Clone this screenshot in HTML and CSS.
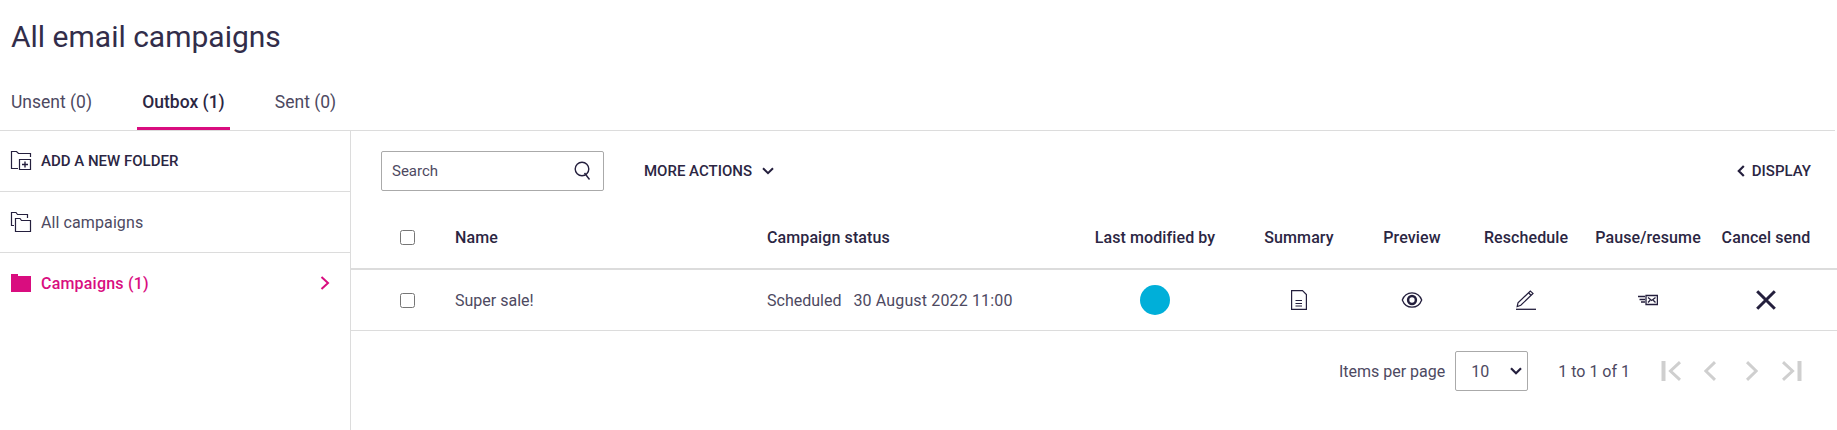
FILE: index.html
```
<!DOCTYPE html>
<html lang="en">
<head>
  <meta charset="UTF-8">
  <meta name="viewport" content="width=device-width, initial-scale=1.0">
  <title>All email campaigns</title>

  <link rel="stylesheet" href="styles.css">
</head>
<body>
  <header>
    <h1>All email campaigns</h1>
    <nav class="tabs">
      <a class="tab tab-unsent"><span>Unsent (0)</span></a>
      <a class="tab tab-outbox active"><span>Outbox (1)</span></a>
      <a class="tab tab-sent"><span>Sent (0)</span></a>
    </nav>
  </header>

  <div class="layout">
    <!-- Folders -->
    <aside class="sidebar">
      <div class="folder add-folder">
        <svg width="22" height="22" viewBox="0 0 22 22" fill="none" stroke="#241f3d" stroke-width="1.2">
          <path d="M8 18.5H1.5V1.5H6.5L8.5 3.5H20.5V7"/>
          <path d="M9.5 9.5H20.5V19.5H9.5Z"/>
          <path d="M15 11.5V17.5M12 14.5H18" stroke-width="1.4"/>
        </svg>
        <span>ADD A NEW FOLDER</span>
      </div>
      <div class="folder">
        <svg width="22" height="22" viewBox="0 0 22 22" fill="none" stroke="#241f3d" stroke-width="1.2">
          <path d="M4 14.5H1.5V1.5H6L7.5 3.5H17.5V7"/>
          <path d="M5.5 20.5V7.5H10L11.5 9.5H20.5V20.5Z"/>
        </svg>
        <span>All campaigns</span>
      </div>
      <div class="folder selected">
        <svg width="22" height="22" viewBox="0 0 22 22" fill="#d90d7f">
          <path d="M1 2H8V4H21V20H1Z"/>
        </svg>
        <span>Campaigns (1)</span>
        <svg class="folder-arrow" width="10" height="16" viewBox="0 0 10 16" fill="none" stroke="#d90d7f" stroke-width="2">
          <path d="M1.5 2L8 8L1.5 14"/>
        </svg>
      </div>
    </aside>

    <main class="content">
      <!-- Toolbar -->
      <div class="toolbar">
        <div class="search">
          <input type="text" placeholder="Search">
          <svg width="18" height="20" viewBox="0 0 18 20" fill="none" stroke="#241f3d" stroke-width="1.4">
            <circle cx="8" cy="8" r="6.8"/>
            <path d="M10.5 12L15.5 18.5"/>
          </svg>
        </div>
        <div class="more-actions">
          <span>MORE ACTIONS</span>
          <svg width="12" height="8" viewBox="0 0 12 8" fill="none" stroke="#241f3d" stroke-width="2">
            <path d="M1 1.2L6 6.2L11 1.2"/>
          </svg>
        </div>
        <div class="display">
          <svg width="8" height="12" viewBox="0 0 8 12" fill="none" stroke="#241f3d" stroke-width="2.2">
            <path d="M6.8 1L1.8 6L6.8 11"/>
          </svg>
          <span>DISPLAY</span>
        </div>
      </div>

      <!-- Campaigns -->
      <table>
        <colgroup>
          <col class="col-check">
          <col class="col-name">
          <col class="col-status">
          <col class="col-modified">
          <col class="col-summary">
          <col class="col-preview">
          <col class="col-reschedule">
          <col class="col-pause">
          <col class="col-cancel">
        </colgroup>
        <thead>
          <tr>
            <th class="check"><input type="checkbox"></th>
            <th class="text">Name</th>
            <th class="text">Campaign status</th>
            <th>Last modified by</th>
            <th>Summary</th>
            <th>Preview</th>
            <th>Reschedule</th>
            <th>Pause/resume</th>
            <th class="last">Cancel send</th>
          </tr>
        </thead>
        <tbody>
          <tr>
            <td class="check"><input type="checkbox"></td>
            <td class="text">Super sale!</td>
            <td class="text">Scheduled <span class="date">30 August 2022 11:00</span></td>
            <td><span class="avatar"></span></td>
            <td>
              <svg width="20" height="20" viewBox="0 0 20 20" fill="none" stroke="#241f3d" stroke-width="1.2">
                <path d="M2.6 0.6H13.5L17.4 4.5V19.3H2.6Z"/>
                <path d="M6.5 10.5H13M6.5 13.5H13M6.5 16H13"/>
              </svg>
            </td>
            <td>
              <svg width="22" height="20" viewBox="0 0 22 20" fill="none" stroke="#241f3d">
                <path d="M1.3 10C3 5.5 6.5 2.8 11 2.8S19 5.5 20.7 10C19 14.5 15.5 17.2 11 17.2S3 14.5 1.3 10Z" stroke-width="1.3"/>
                <circle cx="11" cy="10" r="3.9" stroke-width="2.5"/>
              </svg>
            </td>
            <td>
              <svg width="20" height="20" viewBox="0 0 20 20" fill="none" stroke="#241f3d" stroke-width="1.2">
                <path d="M1.2 16.5L2 12.8L14.3 1L17 3.4L4.8 15.3Z"/>
                <path d="M12.5 2.8L15 5.2"/>
                <path d="M0 19.3H20" stroke-width="1.3"/>
              </svg>
            </td>
            <td>
              <svg width="20" height="12" viewBox="0 0 20 12" fill="none" stroke="#241f3d" stroke-width="1.3">
                <path d="M0 2.5H7M1.5 5.5H7M3 8H7"/>
                <path d="M8 1.5H19.4V10.5H8Z"/>
                <path d="M10 3.5L13.7 6.5L17.5 3.5M10 8.5L12.2 6.2M17.5 8.5L15.2 6.2"/>
              </svg>
            </td>
            <td class="last">
              <svg width="20" height="20" viewBox="0 0 20 20" fill="none" stroke="#241f3d" stroke-width="3">
                <path d="M1.2 1.2L18.8 18.8M18.8 1.2L1.2 18.8"/>
              </svg>
            </td>
          </tr>
        </tbody>
      </table>

      <!-- Pagination -->
      <div class="pagination">
        <span class="per-page">Items per page</span>
        <div class="page-size">
          <span>10</span>
          <svg width="12" height="8" viewBox="0 0 12 8" fill="none" stroke="#241f3d" stroke-width="2.2">
            <path d="M1 1.2L6 6.2L11 1.2"/>
          </svg>
        </div>
        <span class="range">1 to 1 of 1</span>
        <div class="pager">
          <svg width="20" height="20" viewBox="0 0 20 20" fill="none" stroke="#cfcfcf" stroke-width="3">
            <path d="M2.5 0V20" stroke-width="4"/>
            <path d="M19 1.2L9.5 10L19 18.8"/>
          </svg>
          <svg class="prev" width="12" height="20" viewBox="0 0 12 20" fill="none" stroke="#cfcfcf" stroke-width="3">
            <path d="M11 1.2L1.8 10L11 18.8"/>
          </svg>
          <svg class="next" width="12" height="20" viewBox="0 0 12 20" fill="none" stroke="#cfcfcf" stroke-width="3">
            <path d="M1 1.2L10.2 10L1 18.8"/>
          </svg>
          <svg width="20" height="20" viewBox="0 0 20 20" fill="none" stroke="#cfcfcf" stroke-width="3">
            <path d="M17.5 0V20" stroke-width="4"/>
            <path d="M1 1.2L10.5 10L1 18.8"/>
          </svg>
        </div>
      </div>
    </main>
  </div>
</body>
</html>
```
FILE: styles.css
```
* {
  box-sizing: border-box;
  margin: 0;
  padding: 0;
}

body {
  height: 430px;
  display: flex;
  flex-direction: column;
  overflow: hidden;
  background: #fff;
  color: #241f3d;
  font-family: Roboto, sans-serif;
  font-size: 16px;
  font-weight: 400;
}

svg {
  display: block;
  flex: none;
}

header {
  height: 131px;
  flex: none;
  margin-right: 2px;
  border-bottom: 1px solid #dcdcdc;
}

h1 {
  height: 76px;
  padding: 17px 11px 0;
  color: #322d4a;
  font-size: 30px;
  line-height: 40px;
  font-weight: 400;
}

/* Tabs */
.tabs {
  display: flex;
  height: 54px;
  padding-left: 5px;
}

.tab {
  width: 93px;
  padding-top: 14px;
  color: #4d4961;
  font-size: 17.5px;
  line-height: 24px;
  text-align: center;
  white-space: nowrap;
}

.tab-outbox {
  margin: 0 29px 0 39px;
}

.tab.active {
  color: #2b2643;
  font-weight: 500;
  border-bottom: 3px solid #d90d7f;
}

.layout {
  display: flex;
  flex: 1;
}

/* Sidebar */
.sidebar {
  width: 351px;
  flex: none;
  border-right: 1px solid #dcdcdc;
}

.folder {
  display: flex;
  align-items: center;
  height: 61px;
  padding: 0 20px 0 10px;
  color: #4d4961;
  letter-spacing: 0.1px;
  border-bottom: 1px solid #dcdcdc;
}

.folder span {
  margin-left: 9px;
}

.add-folder {
  color: #2b2643;
  font-size: 15px;
  font-weight: 500;
  letter-spacing: 0;
}

.selected {
  height: 60px;
  color: #d90d7f;
  font-weight: 500;
  letter-spacing: 0.2px;
  border-bottom: none;
}

.folder-arrow {
  margin-left: auto;
}

/* Toolbar */
.content {
  flex: 1;
}

.toolbar {
  display: flex;
  align-items: center;
  height: 76px;
  padding: 4px 26px 0 30px;
  color: #2b2643;
  font-weight: 500;
  font-size: 15px;
}

.search {
  display: flex;
  align-items: center;
  width: 223px;
  height: 40px;
  padding: 0 11px 0 10px;
  border: 1px solid #aaa;
  border-radius: 2px;
}

.search input {
  flex: 1;
  min-width: 0;
  border: none;
  outline: none;
  font: 400 15px Roboto, sans-serif;
}

.search input::placeholder {
  color: #4d4961;
}

.more-actions {
  display: flex;
  align-items: center;
  gap: 10px;
  margin-left: 40px;
}

.display {
  display: flex;
  align-items: center;
  gap: 7px;
  margin-left: auto;
}

/* Table */
table {
  width: 100%;
  table-layout: fixed;
  border-collapse: separate;
  border-spacing: 0;
}

.col-check { width: 104px; }
.col-name { width: 312px; }
.col-status { width: 308px; }
.col-modified { width: 160px; }
.col-summary { width: 128px; }
.col-preview { width: 98px; }
.col-reschedule { width: 130px; }
.col-pause { width: 114px; }
.col-cancel { width: 132px; }

th {
  height: 63px;
  color: #2b2643;
  font-weight: 500;
  letter-spacing: 0.1px;
  border-bottom: 2px solid #dcdcdc;
}

td {
  height: 61px;
  color: #4d4961;
  text-align: center;
  border-bottom: 1px solid #dcdcdc;
}

th, td {
  white-space: nowrap;
}

td svg {
  margin: 0 auto;
}

.text {
  text-align: left;
}

.check {
  padding-left: 49px;
  text-align: left;
}

.check input {
  display: block;
  width: 15px;
  height: 15px;
}

.last {
  padding-right: 10px;
}

.date {
  margin-left: 8px;
  letter-spacing: 0.15px;
}

.avatar {
  display: block;
  width: 30px;
  height: 30px;
  margin: 0 auto;
  border-radius: 50%;
  background: #00afd9;
}

/* Pagination */
.pagination {
  display: flex;
  align-items: center;
  justify-content: flex-end;
  margin-top: 20px;
  padding-right: 35px;
  color: #4d4961;
}

.page-size {
  display: flex;
  align-items: center;
  justify-content: space-between;
  width: 73px;
  height: 40px;
  margin: 0 30px 0 10px;
  padding: 0 5px 0 15px;
  border: 1px solid #aaa;
  border-radius: 2px;
}

.pager {
  display: flex;
  width: 141px;
  margin-left: 31px;
}

.prev {
  margin-left: 23px;
}

.next {
  margin: 0 24px 0 30px;
}
```
